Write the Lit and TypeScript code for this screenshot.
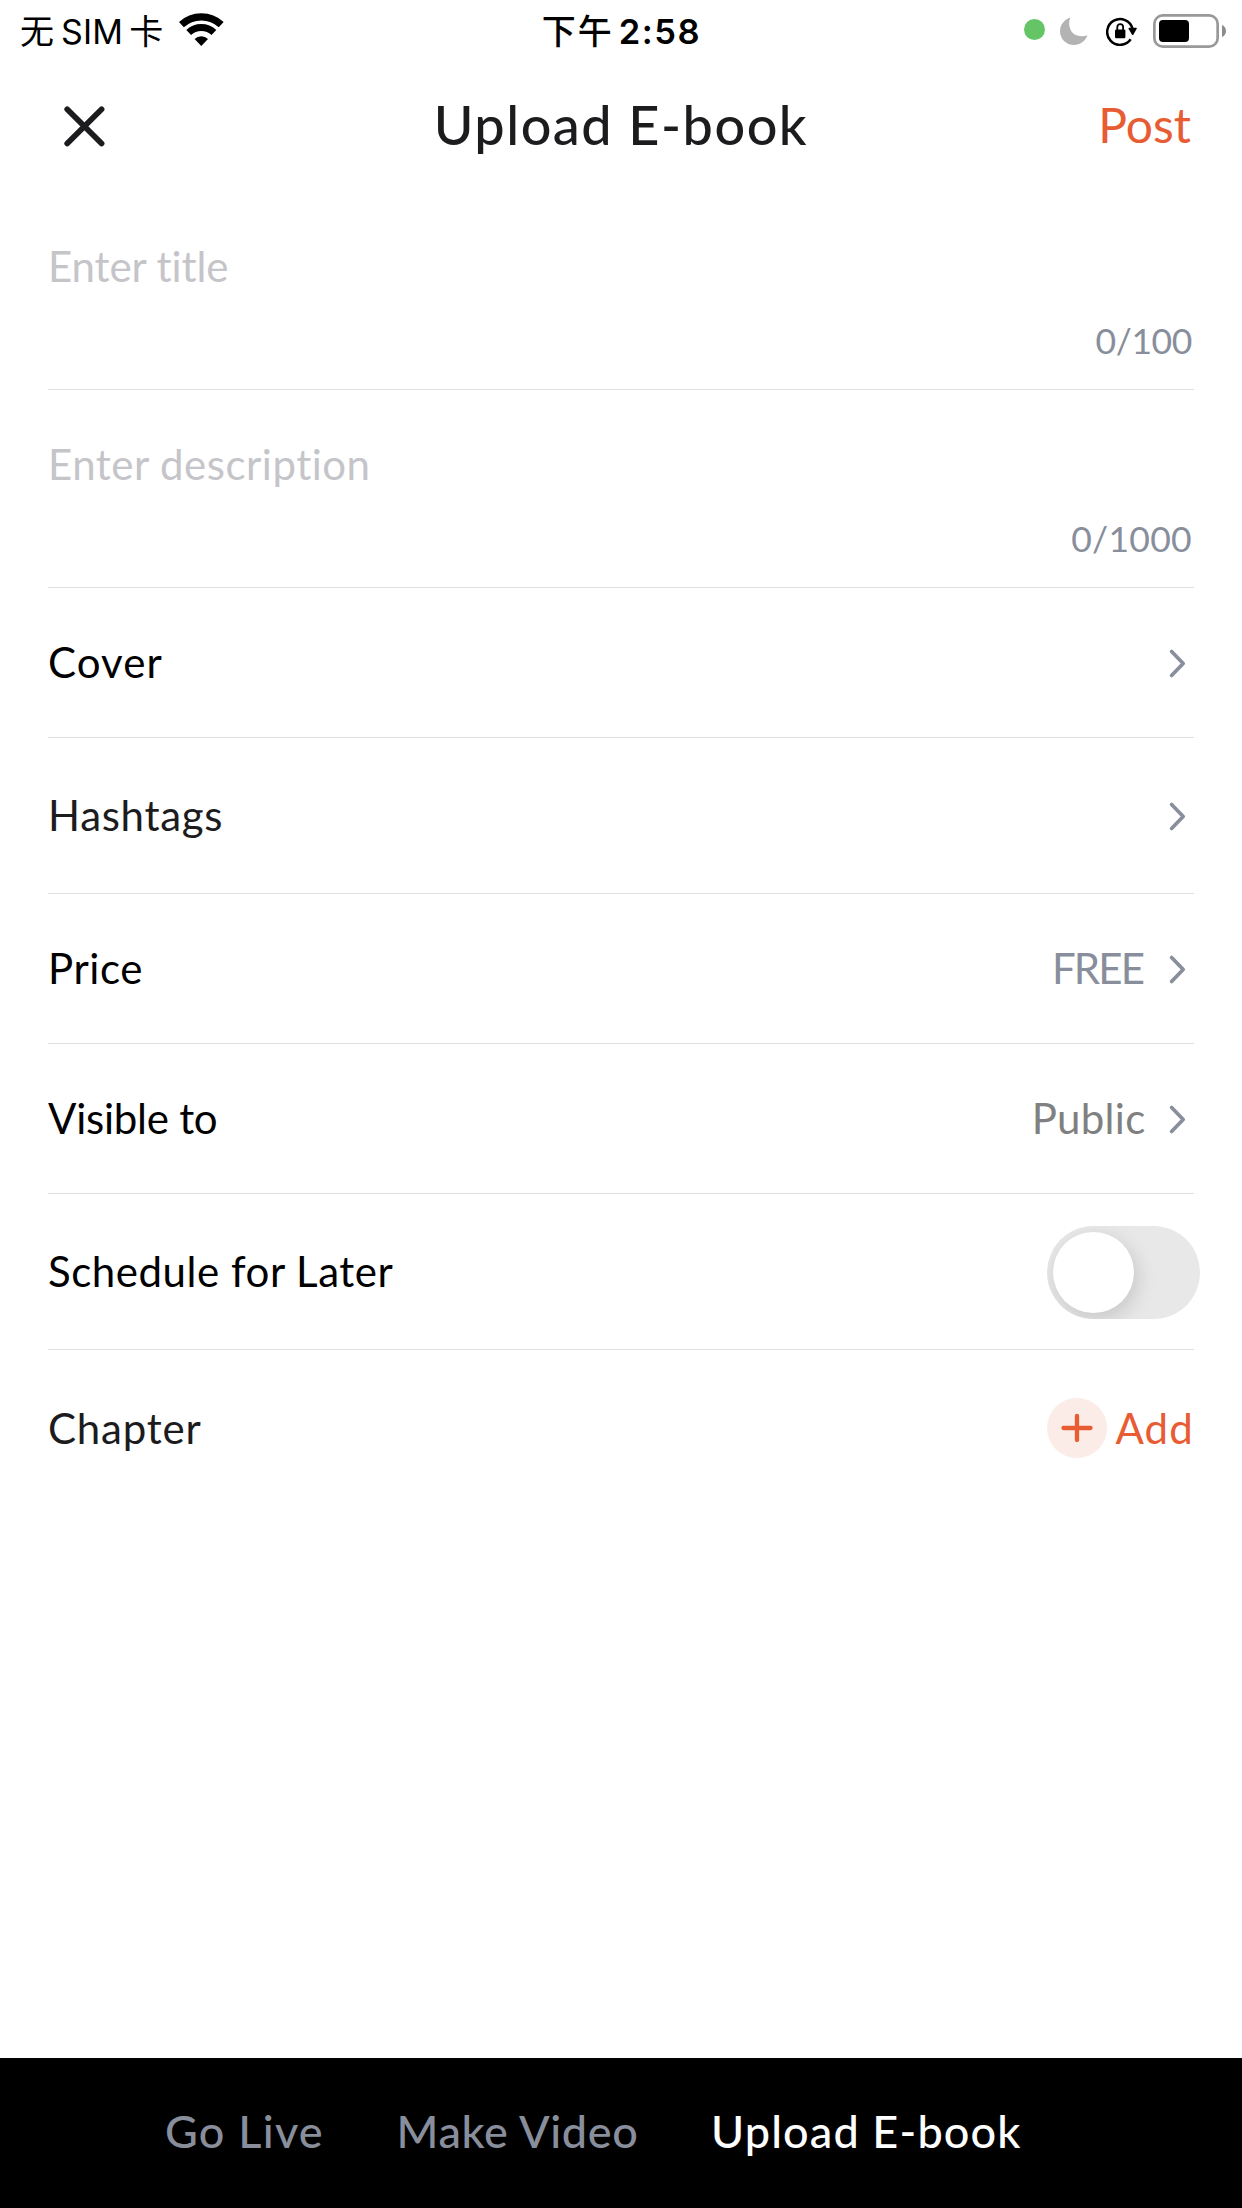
import { LitElement, html, css, svg, nothing } from "lit";
import { customElement, property } from "lit/decorators.js";

@customElement("status-bar")
class StatusBar extends LitElement {
  static styles = css`
    :host {
      display: grid;
      grid-template-columns: 1fr auto 1fr;
      align-items: center;
      height: 62px;
      color: #000;
      font-family: Inter, "Noto Sans CJK SC", sans-serif;
      font-size: 34px;
      line-height: 50px;
    }
    svg { display: block; }
    .group { display: flex; align-items: center; }
    .carrier { padding-left: 20px; }
    .sim { margin: 0 6px 0 7px; padding-top: 1px; letter-spacing: 0.2px; }
    .cjk { font-family: "Noto Sans CJK SC", sans-serif; padding-bottom: 2px; }
    .carrier .cjk { font-weight: 400; }
    .wifi { margin-left: 16px; margin-top: -3px; }
    .time { padding-left: 1px; }
    .time .cjk { font-weight: 500; letter-spacing: 2px; }
    .clock { font-weight: 600; font-size: 34.5px; letter-spacing: 1.5px; margin-left: 5px; padding-top: 1px; }
    .icons { justify-content: flex-end; padding-right: 16px; }
    .dot { width: 21px; height: 21px; border-radius: 50%; background: #65c466; margin: 0 15px 3px 0; }
    .moon { margin-right: 18px; }
    .lock { margin-right: 15px; }
  `;

  render() {
    return html`
      <div class="group carrier">
        <span class="cjk">无</span><span class="sim">SIM</span><span class="cjk">卡</span>
        <svg class="wifi" width="45" height="33" viewBox="0 0 45 33">
          <g fill="none" stroke="#000">
            <path stroke-width="7.2" d="M2.4 11.65A29.2 29.2 0 0 1 42.2 11.65" />
            <path stroke-width="7" d="M9.7 19.5A18.5 18.5 0 0 1 34.9 19.5" />
          </g>
          <path d="M22.3 33L15.6 26.1Q18.3 23.2 22.3 23.2T29 26.1Z" />
        </svg>
      </div>
      <div class="group time"><span class="cjk">下午</span><span class="clock">2:58</span></div>
      <div class="group icons">
        <span class="dot"></span>
        <svg class="moon" width="28" height="28" viewBox="0 0 28 28">
          <path fill="#b3b3b3" d="M10.3.6C3.9 3 0 8.3 0 14.3C0 21.9 6.2 28 13.8 28C20 28 25.3 24 27.5 18.2C20.5 20.6 13.8 18.6 10.9 13.5C8.7 9.6 8.6 4.8 10.3.6Z" />
        </svg>
        <svg class="lock" width="32" height="30" viewBox="0 0 32 30">
          <path fill="none" stroke="#000" stroke-width="2.5" d="M24.7 23.3A12.9 12.9 0 1 1 26.5 12.5" />
          <path d="M22.5 12.7Q22.3 11.7 23.3 11.7H30Q31.2 11.7 30.7 12.7L27.5 18.6Q26.7 19.6 25.9 18.6Z" />
          <rect x="9" y="13.5" width="10.4" height="8.7" rx="1.2" />
          <path fill="none" stroke="#000" stroke-width="1.8" d="M11.3 14V11A2.9 2.9 0 0 1 17.1 11V14" />
        </svg>
        <svg width="73" height="34" viewBox="0 0 73 34">
          <rect x="1.35" y="1.35" width="63.3" height="31.3" rx="8.5" fill="none" stroke="#999" stroke-width="2.7" />
          <rect x="6" y="6" width="30" height="22" rx="4" />
          <path fill="#8c8c8c" d="M69 11Q73 12.8 73 17T69 23Z" />
        </svg>
      </div>
    `;
  }
}

@customElement("text-entry")
class TextEntry extends LitElement {
  @property() placeholder = "";
  @property() count = "";
  static styles = css`
    :host {
      display: flex;
      flex-direction: column;
      box-sizing: border-box;
      height: 198px;
      padding-top: 48px;
      border-bottom: 1px solid #dfdfe0;
    }
    .hint { font-size: 42px; line-height: 52px; color: #c5c5c9; letter-spacing: var(--hint-spacing, 0); }
    .count {
      align-self: flex-end;
      margin-top: 27px;
      margin-right: 2px;
      font-size: 35.5px;
      line-height: 44px;
      color: #888e9b;
      letter-spacing: var(--count-spacing, 0);
    }
  `;
  render() {
    return html`<span class="hint">${this.placeholder}</span><span class="count">${this.count}</span>`;
  }
}

const chevron = svg`<path d="M21.6 10.500L33.2 22.5L21.6 34.5" fill="none" stroke="#888e9b" stroke-width="3.7" stroke-linecap="round" stroke-linejoin="round" />`;

@customElement("setting-row")
class SettingRow extends LitElement {
  @property() label = "";
  @property() value = "";
  @property({ type: Boolean }) arrow = false;
  static styles = css`
    :host {
      display: flex;
      align-items: center;
      box-sizing: border-box;
      height: 150px;
      border-bottom: 1px solid #dfdfe0;
      font-size: 42px;
      line-height: 52px;
      color: #000;
    }
    .label { flex: 1; padding-bottom: 1px; letter-spacing: var(--label-spacing, 0); }
    .value {
      padding-bottom: 1px;
      margin-right: var(--value-gap, 5px);
      color: var(--value-color, #888e9b);
      letter-spacing: var(--value-spacing, 0);
    }
    svg { display: block; }
  `;
  render() {
    return html`
      <span class="label">${this.label}</span>
      ${this.value ? html`<span class="value">${this.value}</span>` : nothing}
      ${this.arrow ? html`<svg width="44" height="44" viewBox="0 0 44 44">${chevron}</svg>` : nothing}
      <slot></slot>
    `;
  }
}

@customElement("app-root")
class AppRoot extends LitElement {
  static styles = css`
    :host {
      display: flex;
      flex-direction: column;
      width: 1242px;
      height: 2208px;
      overflow: hidden;
      background: #fff;
      font-family: Lato, "Noto Sans CJK SC", sans-serif;
      white-space: nowrap;
    }
    svg { display: block; }
    header {
      display: grid;
      grid-template-columns: 1fr auto 1fr;
      align-items: center;
      height: 130px;
      padding: 0 51px 0 48px;
    }
    .title {
      padding: 0 0 5px 3px;
      font-size: 54px;
      line-height: 64px;
      font-weight: 500;
      color: #1c1c1e;
      letter-spacing: 1.5px;
    }
    .post { justify-self: end; padding-bottom: 4px; font-size: 48px; line-height: 58px; color: #e85c33; }
    main { flex: 1; padding: 0 48px; }
    .entry-title { --hint-spacing: -0.1px; --count-spacing: -0.4px; }
    .entry-description { --hint-spacing: 0.5px; --count-spacing: 0.3px; }
    .cover { --label-spacing: 1.1px; }
    .hashtags { --label-spacing: 0.7px; height: 156px; color: #1c1c1e; }
    .price { --label-spacing: 0.6px; --value-spacing: -1.9px; --value-gap: 7px; }
    .visible { --label-spacing: -0.25px; --value-spacing: 0.3px; --value-color: #808080; --value-gap: 4.5px; }
    .schedule { --label-spacing: 0.54px; height: 156px; }
    .chapter { --label-spacing: 0.8px; height: 156px; border-bottom: 0; color: #1c1c1e; }
    .toggle {
      display: flex;
      align-items: center;
      box-sizing: border-box;
      width: 153px;
      height: 93px;
      margin: 1px -6px 0 0;
      padding: 6px;
      border-radius: 47px;
      background: #e8e8e8;
      overflow: hidden;
    }
    .knob { width: 81px; height: 81px; border-radius: 50%; background: #fff; box-shadow: 3px 6px 20px rgba(0, 0, 0, 0.15); }
    .add { display: flex; align-items: center; gap: 8.5px; color: #e85c33; letter-spacing: 1.2px; }
    .add-text { padding-bottom: 1px; }
    footer {
      display: flex;
      align-items: center;
      gap: 72.5px;
      box-sizing: border-box;
      height: 150px;
      padding: 0 0 5px 165px;
      background: #000;
      color: #888e9b;
      font-size: 45px;
      line-height: 54px;
      font-weight: 500;
    }
    .live { letter-spacing: 1.25px; }
    .video { letter-spacing: 0.65px; }
    .ebook { letter-spacing: 1.15px; color: #fff; }
  `;

  render() {
    return html`
      <status-bar></status-bar>
      <header>
        <svg width="72" height="72" viewBox="0 0 72 72">
          <path d="M19.2 18.2L53.6 52.6M53.6 18.2L19.2 52.6" stroke="#1c1c1e" stroke-width="5.7" stroke-linecap="round" />
        </svg>
        <span class="title">Upload E-book</span>
        <span class="post">Post</span>
      </header>
      <main>
        <text-entry class="entry-title" placeholder="Enter title" count="0/100"></text-entry>
        <text-entry class="entry-description" placeholder="Enter description" count="0/1000"></text-entry>
        <setting-row class="cover" label="Cover" arrow></setting-row>
        <setting-row class="hashtags" label="Hashtags" arrow></setting-row>
        <setting-row class="price" label="Price" value="FREE" arrow></setting-row>
        <setting-row class="visible" label="Visible to" value="Public" arrow></setting-row>
        <setting-row class="schedule" label="Schedule for Later">
          <div class="toggle"><div class="knob"></div></div>
        </setting-row>
        <setting-row class="chapter" label="Chapter">
          <div class="add">
            <svg width="60" height="60" viewBox="0 0 60 60">
              <circle cx="30" cy="30" r="30" fill="#fbece7" />
              <path d="M16.5 30H43.5M30 18V42" stroke="#e85c33" stroke-width="4.3" stroke-linecap="round" />
            </svg>
            <span class="add-text">Add</span>
          </div>
        </setting-row>
      </main>
      <footer>
        <span class="live">Go Live</span>
        <span class="video">Make Video</span>
        <span class="ebook">Upload E-book</span>
      </footer>
    `;
  }
}
